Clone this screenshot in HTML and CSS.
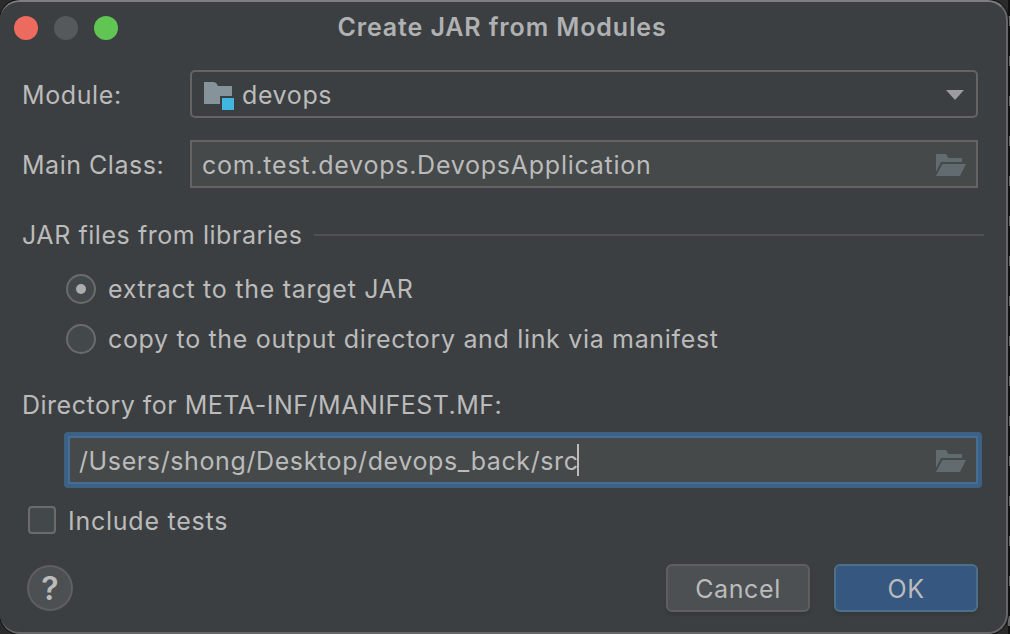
FILE: index.html
```
<!DOCTYPE html>
<html lang="en">
<head>
<meta charset="utf-8">
<title>Create JAR from Modules</title>
<link rel="stylesheet" href="styles.css">
</head>
<body>
<main class="dialog">
  <header class="titlebar">
    <div class="lights"><i class="light close"></i><i class="light minimize"></i><i class="light zoom"></i></div>
    <h1 class="title"><span class="t-title">Create JAR from Modules</span></h1>
  </header>
  <div class="row">
    <label class="label t-module">Module:</label>
    <div class="field combo">
      <svg class="module-icon" width="32" height="30" viewBox="0 0 32 30"><path d="M1 1h9.500q2 0 3 1.500L15 5h14v10H17v8H1z" fill="#87939a"/><path d="M19 17h12v12H19z" fill="#40b6e0"/></svg>
      <span class="grow t-devops">devops</span>
      <svg class="arrow" width="18" height="10" viewBox="0 0 18 10"><path d="M0 0h18L9 10z" fill="#9b9da1"/></svg>
    </div>
  </div>
  <div class="row">
    <label class="label t-main">Main Class:</label>
    <div class="field">
      <span class="grow t-class">com.test.devops.DevopsApplication</span>
      <svg class="folder" width="30" height="22" viewBox="0 0 30 22"><path d="M0 0h10l2.500 4H26v4H5L0 18z" fill="#626b70"/><path d="M6.500 10H30l-6 12H0z" fill="#626b70"/></svg>
    </div>
  </div>
  <div class="section"><span class="t-section">JAR files from libraries</span><i class="rule"></i></div>
  <div class="option"><i class="radio selected"></i><span class="t-extract">extract to the target JAR</span></div>
  <div class="option"><i class="radio"></i><span class="t-copy">copy to the output directory and link via manifest</span></div>
  <div class="directory"><span class="t-directory">Directory for META-INF/MANIFEST.MF:</span></div>
  <div class="focused">
    <span class="t-path">/Users/shong/Desktop/devops_back/src</span><i class="caret"></i>
    <svg class="folder" width="30" height="22" viewBox="0 0 30 22"><path d="M0 0h10l2.500 4H26v4H5L0 18z" fill="#626b70"/><path d="M6.500 10H30l-6 12H0z" fill="#626b70"/></svg>
  </div>
  <div class="check"><i class="checkbox"></i><span class="t-include">Include tests</span></div>
  <footer class="footer">
    <div class="help">?</div>
    <div class="button"><span class="t-cancel">Cancel</span></div>
    <div class="button primary"><span class="t-ok">OK</span></div>
  </footer>
</main>
</body>
</html>
```
FILE: styles.css
```
* { box-sizing: border-box; }
body {
  margin: 0; width: 1010px; height: 634px; overflow: hidden;
  background: linear-gradient(#2b2b2b, #2b2b2b) 0 0 / 1008px 100% no-repeat,
    repeating-linear-gradient(#111 0 16px, #666 16px 26px, #111 26px 40px);
  font: 25px/30px Inter, "Liberation Sans", sans-serif; color: #bbb;
}
.dialog {
  width: 1008px; height: 634px; display: flex; flex-direction: column;
  background: #3c3f41; border: 2px solid #656667; border-top-color: #7d7f80; border-left: 0;
  border-radius: 20px; box-shadow: 0 0 0 1px #111;
}
.dialog span, .label { white-space: nowrap; }
.titlebar { height: 68px; display: grid; grid-template-columns: 130px 744px 1fr; padding-top: 10px; }
.lights { display: flex; gap: 16px; padding: 4px 0 0 14px; }
.light { width: 24px; height: 24px; border-radius: 50%; }
.close { background: #ed6a5e; }
.minimize { background: #56595b; }
.zoom { background: #61c554; }
.title { margin: 0; font-size: 25px; line-height: 30px; font-weight: 600; text-align: center; color: #b0b1b2; }
.row { display: flex; align-items: center; height: 48px; margin-bottom: 22px; padding-left: 22px; }
.label { width: 168px; padding-top: 2px; }
.field { width: 788px; height: 48px; border: 2px solid #646464; background: #45494a; display: flex; align-items: center; padding: 2px 10px 0; }
.combo { background: #3c3f41; border-radius: 5px; padding: 2px 12px 0 11px; }
.module-icon { margin: 2px 7px 0 0; }
.grow { flex: 1; }
.section { display: flex; align-items: center; height: 30px; margin: 10px 22px 0 22px; gap: 12px; }
.t-section { width: 280px; }
.rule { width: 670px; height: 2px; background: #515151; }
.option { display: flex; align-items: center; height: 30px; margin: 24px 0 0 66px; gap: 12px; }
.option + .option { margin-top: 20px; }
.radio { width: 30px; height: 30px; border: 2px solid #6b6b6b; border-radius: 50%; background: #43494a; display: grid; place-items: center; }
.selected::after { content: ""; width: 10px; height: 10px; border-radius: 50%; background: #adadad; }
.directory { margin: 36px 0 0 22px; height: 30px; }
.focused {
  width: 918px; height: 56px; margin: 12px 0 0 64px; border: 4px solid #3d6185; border-radius: 4px;
  box-shadow: inset 0 0 0 2px #466d94; background: #45494a; display: flex; align-items: center; padding: 2px 12px 0 11px;
}
.caret { width: 2px; height: 32px; background: #bbb; margin: 0 0 2px -2px; }
.focused .folder { margin-left: auto; }
.check { display: flex; align-items: center; height: 28px; margin: 18px 0 0 28px; gap: 12px; }
.t-include { padding-top: 2px; }
.checkbox { width: 28px; height: 28px; border: 2px solid #6b6b6b; border-radius: 4px; background: #43494a; }
.footer { display: flex; height: 48px; margin: 30px 28px 0 27px; gap: 24px; }
.help { width: 46px; height: 46px; border: 2px solid #5e6060; border-radius: 50%; background: #4c5052; text-align: center; font-size: 32px; line-height: 44px; font-weight: 600; margin: 1px auto 0 0; }
.button { width: 144px; height: 48px; border: 2px solid #5e6060; border-radius: 6px; background: #4c5052; display: grid; place-items: center; padding-top: 2px; box-shadow: 0 3px 3px #36393b; }
.primary { background: #365880; border-color: #4c708c; }

/* Tracking per text run */
.t-title { letter-spacing: .88px; }
.t-module, .t-devops, .t-path { letter-spacing: .61px; }
.t-main { letter-spacing: .52px; }
.t-class { letter-spacing: .75px; }
.t-section { letter-spacing: .56px; }
.t-extract { letter-spacing: .73px; }
.t-copy { letter-spacing: .67px; }
.t-directory { letter-spacing: .5px; }
.t-include { letter-spacing: .75px; }
.t-cancel, .t-ok { letter-spacing: .6px; }
```
